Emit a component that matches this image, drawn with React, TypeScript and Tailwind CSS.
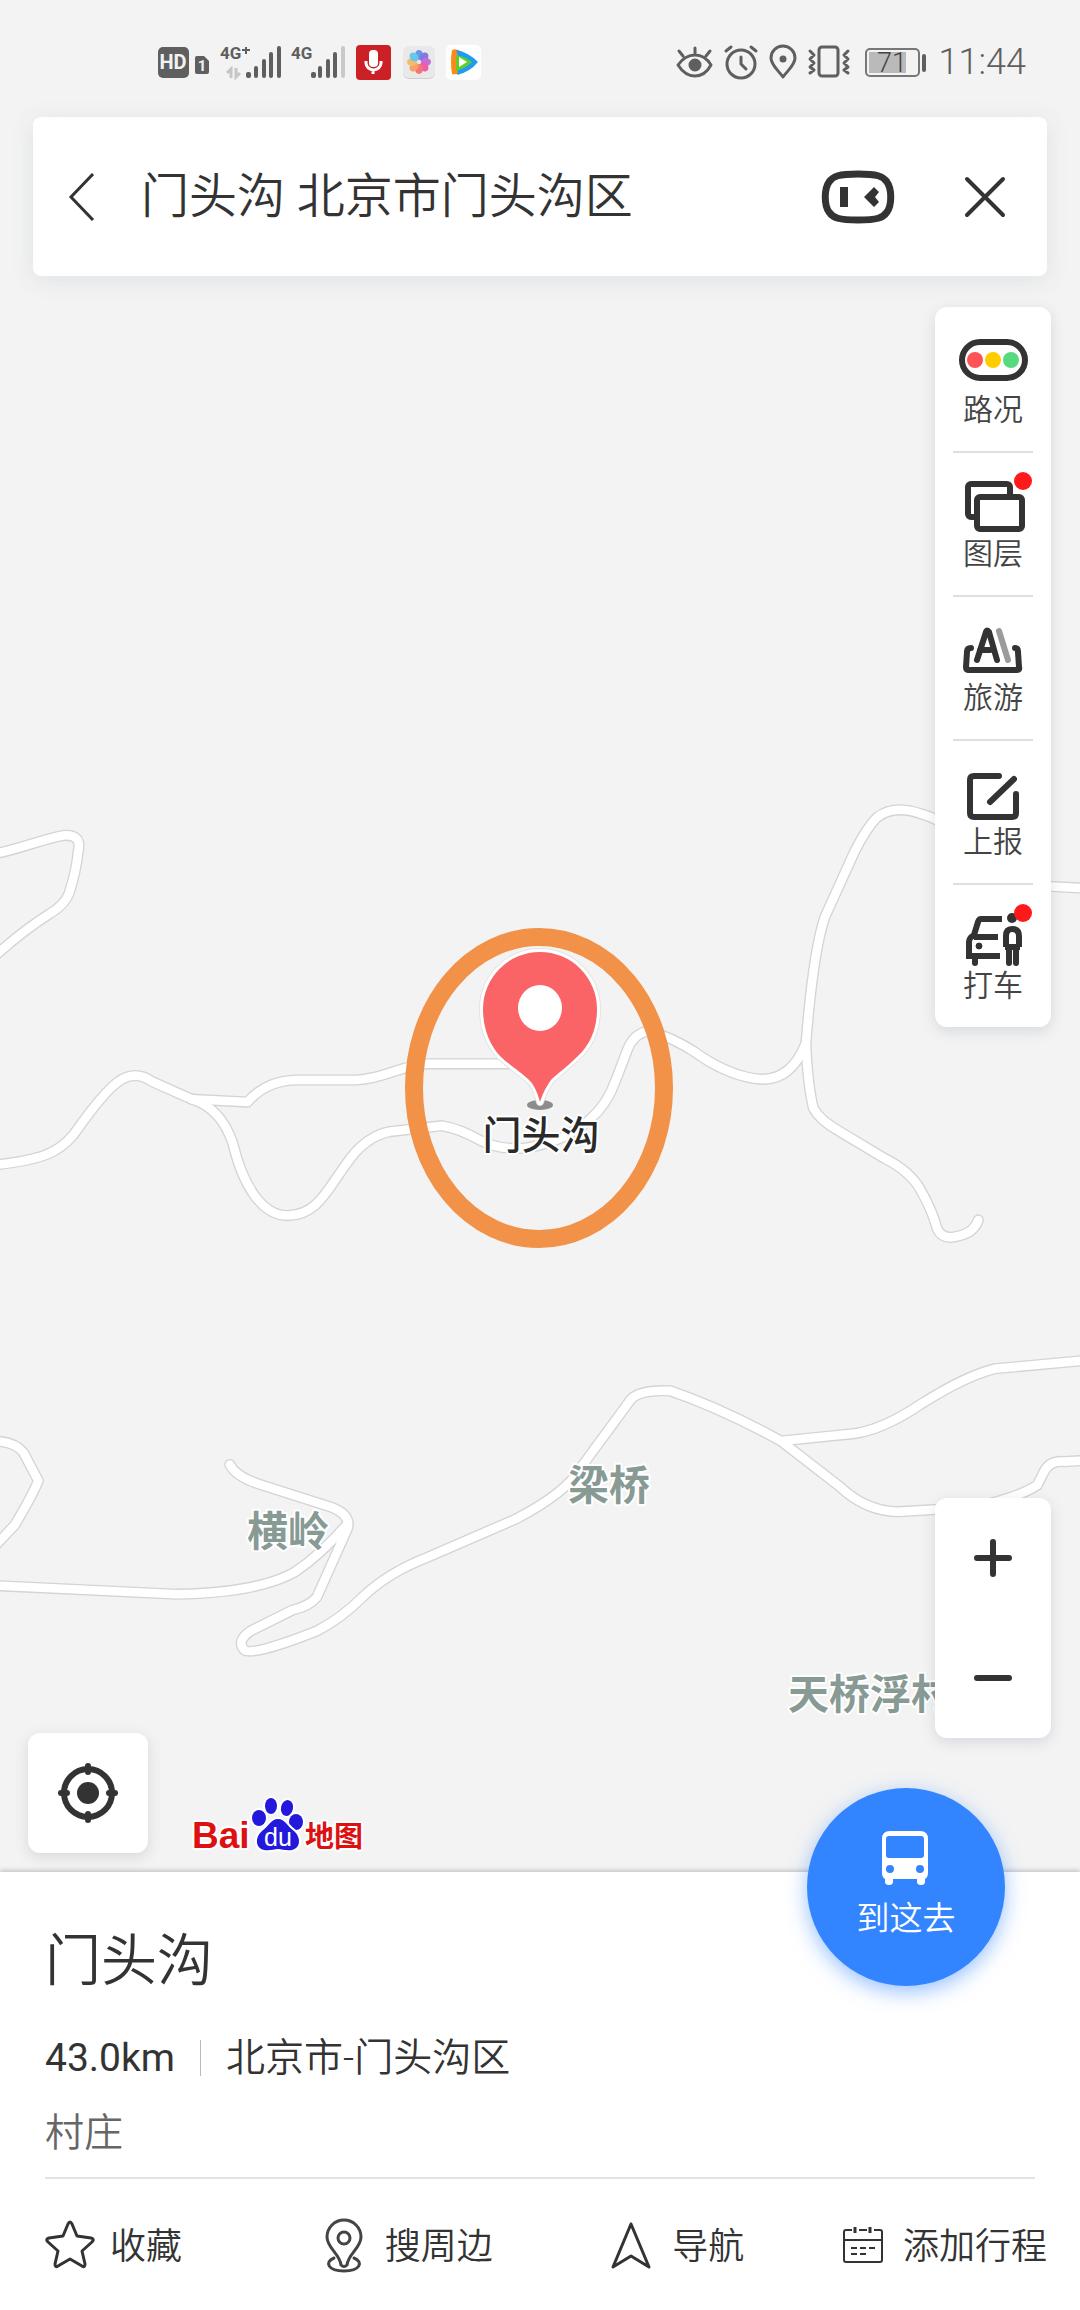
import React from 'react';

const roads = [
  'M-6 580 C15 576 30 569 43 567 Q56 566 53 578 Q52 590 47 606 Q44 614 34 620 Q15 632 -6 651',
  'M-6 791 C30 787 40 782 50 770 Q75 734 86 731 Q95 728 103 734 L130 746 Q150 752 158 776 C165 805 178 825 195 825 C215 825 222 808 235 790 Q248 771 265 768 L300 764 Q312 766 326 774 Q340 781 358 779 Q385 774 400 760 Q412 750 418 733 L426 712 Q430 702 439 700 Q452 702 470 713 Q492 729 512 732 Q536 736 547 708',
  'M130 746 L168 748 Q180 734 200 733 L242 733 C262 732 272 723 290 722 L356 722',
  'M740 603 L700 601 Q670 590 655 570 Q640 556 624 552 Q606 546 595 555 Q588 562 580 578 L560 622 Q552 645 547 708 Q548 735 552 752 Q556 760 570 768 L600 786 Q618 795 625 808 Q633 822 636 834 Q640 842 650 839 Q661 837 664 828',
  'M156 994 Q160 1002 175 1007 L225 1023 Q238 1028 236 1037 L215 1084 Q210 1090 198 1093 L170 1107 Q160 1114 166 1120 Q172 1124 215 1107 Q232 1098 245 1085 Q262 1068 290 1057 L350 1031 Q385 1013 395 995 L428 950 Q434 943 455 944 Q490 956 530 978 L570 1009 Q588 1026 610 1026 L660 1023 Q690 1017 704 1008 L708 1000 Q712 991 722 992 L740 991',
  'M530 978 L580 973 Q600 970 625 953 Q655 934 675 929 L740 923',
  'M-6 978 Q10 978 16 986 L26 1005 Q22 1015 10 1035 L-6 1052',
  'M-6 1076 L120 1082 Q175 1081 200 1067 Q218 1055 236 1034',
];

const places = [
  { name: '梁桥', x: 568, y: 1500 },
  { name: '横岭', x: 247, y: 1546 },
  { name: '天桥浮村', x: 788, y: 1709 },
];

const pinPath =
  'M540 1102 C537 1091 533 1083 528 1079 C518 1070 508 1064 500 1056 C488 1043 483 1026 483 1009 A57 57 0 0 1 597 1009 C597 1026 592 1043 578 1056 C568 1066 558 1073 551 1080 C546 1087 543 1093 540 1102Z';

const MapCanvas: React.FC = () => (
  <svg
    className="absolute inset-0 h-full w-full"
    viewBox="0 0 1080 1872"
    preserveAspectRatio="xMidYMin slice"
    aria-hidden="true"
  >
    <g transform="scale(1.4734)" fill="none" strokeLinecap="round" strokeLinejoin="round">
      {roads.map((d) => (
        <path key={d} d={d} stroke="#d4d4d4" strokeWidth="7.6" />
      ))}
      {roads.map((d) => (
        <path key={d} d={d} stroke="#ffffff" strokeWidth="5.8" />
      ))}
    </g>
    <g
      className="font-['Noto_Sans_CJK_SC',sans-serif]"
      fontWeight="700"
      stroke="#ffffff"
      strokeWidth="4"
      strokeLinejoin="round"
      paintOrder="stroke"
    >
      {places.map((place) => (
        <text key={place.name} x={place.x} y={place.y} fontSize="41" fill="#889a94">
          {place.name}
        </text>
      ))}
      <text x="541" y="1149" fontSize="39" fontWeight="500" fill="#2a2a2a" textAnchor="middle">
        门头沟
      </text>
    </g>
    <ellipse cx="540" cy="1105" rx="13" ry="5" fill="#8c8c8c" />
    <path d={pinPath} fill="#e3e3e3" stroke="#e3e3e3" strokeWidth="8" strokeLinejoin="round" />
    <path
      d={pinPath}
      fill="#fb6467"
      stroke="#ffffff"
      strokeWidth="6"
      strokeLinejoin="round"
      paintOrder="stroke"
    />
    <ellipse cx="540" cy="1008" rx="22" ry="23" fill="#ffffff" />
    <ellipse cx="539" cy="1088" rx="125" ry="151" fill="none" stroke="#f29249" strokeWidth="18" />
  </svg>
);

const StatusBar: React.FC = () => (
  <header className="flex h-[124px] items-center justify-between pr-[54px] pl-[157px] font-[Roboto,sans-serif] text-[#5f5f5f]">
    <div className="flex items-center">
      <svg className="h-9 w-[54px] overflow-visible" viewBox="0 0 54 36" fill="#5f5f5f">
        <rect x="1" y="3" width="31" height="31" rx="5" />
        <text x="16" y="25" fontSize="20" fontWeight="700" fill="#f2f2f2" textAnchor="middle">HD</text>
        <path d="M40 12 h7 l5 5 v11 a2 2 0 0 1 -2 2 h-10 a2 2 0 0 1 -2 -2 v-14 a2 2 0 0 1 2 -2z" />
        <text x="45" y="27" fontSize="15" fontWeight="700" fill="#f2f2f2" textAnchor="middle">1</text>
      </svg>
      <svg className="ml-2 h-9 w-[64px] overflow-visible" viewBox="0 0 64 36" fill="#5f5f5f">
        <text x="1" y="15" fontSize="17" fontWeight="700">4G</text>
        <path d="M27 3 v7 M23 6 h8" stroke="#5f5f5f" strokeWidth="2" />
        <path d="M12 34 v-9 l-4 4 M17 24 v9 l4 -4" fill="none" stroke="#c6c6c6" strokeWidth="3" />
        <rect x="27" y="28" width="5" height="6" rx="2" />
        <rect x="35" y="22" width="4" height="12" rx="2" />
        <rect x="43" y="15" width="4" height="19" rx="2" />
        <rect x="50" y="8" width="4" height="26" rx="2" />
        <rect x="58" y="2" width="4" height="32" rx="2" />
      </svg>
      <svg className="ml-2 h-9 w-[56px] overflow-visible" viewBox="0 0 56 36" fill="#5f5f5f">
        <text x="0" y="15" fontSize="17" fontWeight="700">4G</text>
        <rect x="20" y="28" width="5" height="6" rx="2" />
        <rect x="27" y="22" width="4" height="12" rx="2" />
        <rect x="35" y="15" width="4" height="19" rx="2" />
        <rect x="42" y="8" width="4" height="26" rx="2" />
        <rect x="50" y="2" width="4" height="32" rx="2" fill="#c9c9c9" />
      </svg>
      <svg className="ml-2 h-9 w-9" viewBox="0 0 36 36">
        <rect x="1" y="1" width="35" height="35" rx="4" fill="#cc2027" />
        <rect x="14" y="6" width="9" height="17" rx="4" fill="#ffffff" />
        <path d="M11 17 v2 a7.500 7 0 0 0 15 0 v-2 M18 26 v4" fill="none" stroke="#ffffff" strokeWidth="3" />
      </svg>
      <svg className="ml-3 h-9 w-8" viewBox="0 0 32 36">
        <rect x="0" y="3" width="32" height="32" rx="6" fill="#cfcfcf" />
        <rect x="0" y="2" width="32" height="32" rx="6" fill="#e9e9e9" />
        <g transform="translate(16 18)" opacity="0.9">
          <ellipse cy="-7" rx="4" ry="5" fill="#5b8fe8" />
          <ellipse cy="-7" rx="4" ry="5" fill="#7a6be0" transform="rotate(45)" />
          <ellipse cy="-7" rx="4" ry="5" fill="#c45fd6" transform="rotate(90)" />
          <ellipse cy="-7" rx="4" ry="5" fill="#ee4f9b" transform="rotate(135)" />
          <ellipse cy="-7" rx="4" ry="5" fill="#f36a6a" transform="rotate(180)" />
          <ellipse cy="-7" rx="4" ry="5" fill="#f79a5a" transform="rotate(225)" />
          <ellipse cy="-7" rx="4" ry="5" fill="#f8b560" transform="rotate(270)" />
          <ellipse cy="-7" rx="4" ry="5" fill="#5cc4ec" transform="rotate(315)" />
        </g>
      </svg>
      <svg className="ml-[11px] h-9 w-9" viewBox="0 0 36 36">
        <rect x="0" y="1" width="35" height="35" rx="5" fill="#ffffff" />
        <path d="M6 6 Q4 18 6 30 Q12 31 16 28 V8 Q10 4 6 6z" fill="#fb8a1a" />
        <path d="M10 6 Q22 8 32 18 Q24 28 11 31 Q15 18 10 6z" fill="#1f9bf0" />
        <path d="M10 11 Q20 13 26 18 Q20 24 10 27z" fill="#5fce2b" />
        <path d="M13 13 L21 18 L13 23z" fill="#ffffff" />
      </svg>
    </div>
    <div className="flex items-center">
      <svg className="h-9 w-[176px]" viewBox="0 0 176 36" fill="none" stroke="#5f5f5f" strokeWidth="3" strokeLinecap="round" strokeLinejoin="round">
        <path d="M3 21 Q10 11 20 11 Q30 11 36 21 Q30 32 20 32 Q10 32 3 21z M20 9 V4 M8 12 L4 7 M31 12 L35 7" />
        <circle cx="20" cy="21" r="5" fill="#5f5f5f" />
        <circle cx="66" cy="20" r="14" />
        <path d="M66 13 v7 l5 5 M51 7 l5 -4 M76 3 l5 4" />
        <path d="M108 33 C103 26 96 21 96 14 A12 12 0 0 1 120 14 C120 21 113 26 108 33z" />
        <circle cx="108" cy="15" r="2" fill="#5f5f5f" />
        <rect x="144" y="3" width="19" height="29" rx="3" />
        <path d="M135 7 l4 4 l-4 4 l4 4 l-4 4 l4 3 l-4 3 M173 7 l-4 4 l4 4 l-4 4 l4 4 l-4 3 l4 3" />
      </svg>
      <svg className="ml-[14px] h-9 w-[62px] overflow-visible" viewBox="0 0 62 36">
        <rect x="1" y="5" width="53" height="27" rx="4" fill="none" stroke="#777777" strokeWidth="2" />
        <rect x="4" y="8" width="37" height="21" fill="#bababa" />
        <rect x="57" y="10" width="4" height="18" rx="2" fill="#5f5f5f" />
        <text x="27" y="28" fontSize="27" textAnchor="middle" fill="#444444" fontWeight="300">71</text>
      </svg>
      <time className="ml-3 text-[36px] leading-10 font-light">11:44</time>
    </div>
  </header>
);

const SearchBar: React.FC = () => (
  <form className="mx-[33px] -mt-[7px] flex h-[159px] shrink-0 items-center rounded-lg bg-white pr-[30px] pl-6 shadow-[0_4px_24px_rgba(60,80,110,0.10)]">
    <button type="button" aria-label="返回" className="flex h-16 w-12 items-center justify-center">
      <svg className="h-12 w-7" viewBox="0 0 28 48" fill="none" stroke="#333333" strokeWidth="3">
        <path d="M26 1 L4 24 L26 47" />
      </svg>
    </button>
    <input
      aria-label="搜索地点"
      defaultValue="门头沟 北京市门头沟区"
      className="ml-9 h-[72px] min-w-0 flex-1 bg-transparent text-[48px] font-[350] text-[#333333] outline-none"
    />
    <button type="button" aria-label="语音助手" className="flex h-16 w-20 items-center justify-center">
      <svg className="h-14 w-[74px]" viewBox="0 0 74 56">
        <path
          d="M37 5 C56 5 62 7 66 13 C71 20 71 36 66 43 C62 49 56 51 37 51 C18 51 12 49 8 43 C3 36 3 20 8 13 C12 7 18 5 37 5z"
          fill="none"
          stroke="#333333"
          strokeWidth="7"
        />
        <rect x="19" y="18" width="8" height="20" fill="#333333" />
        <path d="M43 28 L53 18 L58 23 L54 28 L58 33 L53 38z" fill="#333333" />
      </svg>
    </button>
    <button type="button" aria-label="关闭" className="ml-[55px] flex h-16 w-16 items-center justify-center">
      <svg className="h-11 w-11" viewBox="0 0 44 44" fill="none" stroke="#333333" strokeWidth="4" strokeLinecap="round">
        <path d="M4 4 L40 40 M40 4 L4 40" />
      </svg>
    </button>
  </form>
);

const TrafficIcon = () => (
  <svg className="h-16 w-20 overflow-visible" viewBox="0 0 80 64">
    <rect x="9" y="12" width="63" height="36" rx="18" fill="none" stroke="#333333" strokeWidth="6" />
    <circle cx="22" cy="30" r="8" fill="#fc5456" />
    <circle cx="40" cy="30" r="8" fill="#ffcc00" />
    <circle cx="58" cy="30" r="8" fill="#57d980" />
  </svg>
);

const LayersIcon = () => (
  <svg className="h-16 w-20 overflow-visible" viewBox="0 0 80 64" fill="none" stroke="#333333" strokeWidth="6" strokeLinejoin="round">
    <path d="M21 43 h-3 a3 3 0 0 1 -3 -3 v-27 a3 3 0 0 1 3 -3 h36 a3 3 0 0 1 3 3 v9" />
    <rect x="24" y="23" width="45" height="32" rx="3" />
    <circle cx="70" cy="7" r="9" fill="#ff1a1a" stroke="none" />
  </svg>
);

const TravelIcon = () => (
  <svg className="h-16 w-20 overflow-visible" viewBox="0 0 80 64" fill="none" stroke="#333333" strokeWidth="6" strokeLinecap="round" strokeLinejoin="round">
    <path d="M46 13 L55 42" stroke="#9b9b9b" />
    <path d="M24 42 L33 14 Q34 11 36 14 L44 42 M27 32 H37" />
    <path d="M18 30 Q14 30 14 34 L13 49 Q13 52 16 52 H64 Q67 52 66 49 L65 34 Q65 30 62 30" />
  </svg>
);

const ReportIcon = () => (
  <svg className="h-16 w-20 overflow-visible" viewBox="0 0 80 64" fill="none" stroke="#333333" strokeWidth="6" strokeLinecap="round" strokeLinejoin="round">
    <path d="M46 14 H21 Q17 14 17 18 V51 Q17 55 21 55 H59 Q63 55 63 51 V32 M61 17 L37 40" />
  </svg>
);

const TaxiIcon = () => (
  <svg className="h-16 w-20 overflow-visible" viewBox="0 0 80 64" fill="none" stroke="#333333" strokeWidth="6">
    <path d="M49 13 H28 Q26 13 25 16 L21 29 Q16 32 16 36 V50 H47 M21 31 H45" />
    <path d="M22 52 v5" strokeLinecap="round" />
    <circle cx="26" cy="40" r="3" fill="#333333" strokeWidth="1" />
    <circle cx="59" cy="12" r="5" fill="#333333" stroke="none" />
    <path d="M53 41 V30 Q53 23 59 23 Q66 23 66 30 V41 M52 41 H67" />
    <path d="M56 41 V57 M63 41 V57" strokeWidth="6" strokeLinecap="round" />
    <circle cx="70" cy="7" r="9" fill="#ff1a1a" stroke="none" />
  </svg>
);

const tools = [
  { label: '路况', Icon: TrafficIcon },
  { label: '图层', Icon: LayersIcon },
  { label: '旅游', Icon: TravelIcon },
  { label: '上报', Icon: ReportIcon },
  { label: '打车', Icon: TaxiIcon },
];

const panelShadow = 'shadow-[0_4px_14px_rgba(60,80,110,0.16)]';

const ToolPanel: React.FC = () => (
  <nav className={`flex w-[116px] flex-col rounded-xl bg-white px-[18px] ${panelShadow}`}>
    {tools.map(({ label, Icon }, i) => (
      <button
        key={label}
        type="button"
        className={`flex h-36 flex-col items-center border-t-2 pt-[21px] ${i > 0 ? 'border-[#dedede]' : 'border-transparent'}`}
      >
        <Icon />
        <span className="text-[30px] leading-8 font-[350] text-[#444444]">{label}</span>
      </button>
    ))}
  </nav>
);

const ZoomPanel: React.FC = () => (
  <div className={`flex w-[116px] flex-col rounded-xl bg-white ${panelShadow}`}>
    <button type="button" aria-label="放大" className="flex h-[120px] items-center justify-center">
      <svg className="h-11 w-11" viewBox="0 0 44 44" stroke="#333333" strokeWidth="6" strokeLinecap="round">
        <path d="M6 22 H38 M22 6 V38" />
      </svg>
    </button>
    <button type="button" aria-label="缩小" className="flex h-[120px] items-center justify-center">
      <svg className="h-11 w-11" viewBox="0 0 44 44" stroke="#333333" strokeWidth="6" strokeLinecap="round">
        <path d="M6 22 H38" />
      </svg>
    </button>
  </div>
);

const BaiduLogo: React.FC = () => (
  <svg className="h-16 w-[180px] overflow-visible" viewBox="0 0 180 64" role="img" aria-label="Baidu 地图">
    <g stroke="#ffffff" strokeWidth="4" paintOrder="stroke" strokeLinejoin="round">
      <text x="4" y="59" fontSize="37" fontWeight="700" fill="#dc1111" className="font-['Liberation_Sans',sans-serif]">Bai</text>
      <ellipse cx="71" cy="29" rx="7" ry="8" fill="#2319dc" />
      <ellipse cx="83" cy="17" rx="6" ry="8" fill="#2319dc" />
      <ellipse cx="99" cy="19" rx="6" ry="8" fill="#2319dc" transform="rotate(12 99 19)" />
      <ellipse cx="108" cy="33" rx="7" ry="8" fill="#2319dc" />
      <path d="M90 30 C97 30 100 38 106 42 C113 48 113 59 104 61 C98 62 94 60 90 60 C86 60 82 62 76 61 C67 59 67 48 74 42 C80 38 83 30 90 30z" fill="#2319dc" />
      <text x="117" y="58" fontSize="29" fontWeight="700" fill="#dc1111" className="font-['Noto_Sans_CJK_SC',sans-serif]">地图</text>
    </g>
    <text x="90" y="57" fontSize="25" fill="#ffffff" textAnchor="middle" className="font-['Liberation_Sans',sans-serif]">du</text>
  </svg>
);

const StarIcon = () => (
  <svg className="h-14 w-12 overflow-visible" viewBox="0 0 48 56" fill="none" stroke="#333333" strokeWidth="3" strokeLinejoin="round">
    <path d="M23 7 Q25 3 27 7 L32 19 L46 21 Q50 22 47 25 L37 34 L40 47 Q40 51 37 49 L25 42 L13 49 Q10 51 10 47 L13 34 L3 25 Q0 22 4 21 L18 19z" />
  </svg>
);

const NearbyIcon = () => (
  <svg className="h-14 w-12 overflow-visible" viewBox="0 0 48 56" fill="none" stroke="#444444" strokeWidth="3" strokeLinecap="round" strokeLinejoin="round">
    <path d="M21 48 C20 37 7 31 7 20 A17 17 0 0 1 41 20 C41 31 28 37 27 48 Q24 51 21 48z" />
    <circle cx="24" cy="21" r="6" />
    <path d="M14 41 C4 45 8 54 24 54 C40 54 44 45 34 41" />
  </svg>
);

const NavigateIcon = () => (
  <svg className="h-14 w-12" viewBox="0 0 48 56" fill="none" stroke="#333333" strokeWidth="3" strokeLinejoin="round">
    <path d="M24 7 L42 50 L24 39 L6 50z" />
  </svg>
);

const CalendarIcon = () => (
  <svg className="h-14 w-12" viewBox="0 0 48 56" fill="none" stroke="#333333" strokeWidth="2">
    <path d="M14 13 H8 Q6 13 6 15 V43 Q6 45 8 45 H42 Q44 45 44 43 V15 Q44 13 42 13 H36 M21 13 H29 M6 23 H44" />
    <path d="M17 10 V16 M32 10 V16" strokeWidth="3" />
    <path d="M13 31 H19 M22 31 H28 M31 31 H37 M13 37 H19 M22 37 H28" />
  </svg>
);

const actions = [
  { label: '收藏', Icon: StarIcon },
  { label: '搜周边', Icon: NearbyIcon },
  { label: '导航', Icon: NavigateIcon },
  { label: '添加行程', Icon: CalendarIcon },
];

const PlaceSheet: React.FC = () => (
  <section className="relative bg-white pr-[33px] pl-[45px] shadow-[0_-2px_4px_rgba(0,0,0,0.18)]">
    <button
      type="button"
      className="absolute -top-[84px] right-[75px] flex h-[198px] w-[198px] flex-col items-center rounded-full bg-[#3385ff] pt-[39px] text-white shadow-[0_6px_20px_rgba(51,133,255,0.5)]"
    >
      <svg className="h-16 w-16" viewBox="0 0 64 64">
        <path
          fillRule="evenodd"
          fill="#ffffff"
          d="M16 4 H46 Q54 4 54 12 V46 Q54 50 51 52 V55 Q51 58 47 58 Q43 58 43 55 V52 H19 V55 Q19 58 15 58 Q11 58 11 55 V52 Q8 50 8 46 V12 Q8 4 16 4z M15 9 Q12 9 12 12 V28 Q12 31 15 31 H47 Q50 31 50 28 V12 Q50 9 47 9z"
        />
        <circle cx="16" cy="42" r="4" fill="#3385ff" />
        <circle cx="46" cy="42" r="4" fill="#3385ff" />
      </svg>
      <span className="mt-2 text-[33px] leading-10 font-[350]">到这去</span>
    </button>

    <h1 className="pt-[57px] text-[56px] leading-[64px] font-[350] text-[#333333]">门头沟</h1>
    <p className="mt-[41px] flex items-center text-[39px] leading-[48px] text-[#333333]">
      <span>43.0km</span>
      <span className="mx-[25px] h-9 w-px bg-[#bbbbbb]" />
      <span className="font-[350]">北京市-门头沟区</span>
    </p>
    <p className="mt-[31px] text-[39px] leading-10 font-[350] text-[#666666]">村庄</p>
    <hr className="mt-6 mr-3 border-t-2 border-[#e3e3e3]" />
    <div className="grid h-[131px] grid-cols-[275fr_288fr_231fr_208fr] items-center">
      {actions.map(({ label, Icon }) => (
        <button key={label} type="button" className="flex items-center gap-[17px] whitespace-nowrap">
          <Icon />
          <span className="pt-1 text-[36px] leading-10 font-[350] text-[#333333]">{label}</span>
        </button>
      ))}
    </div>
  </section>
);

export default function App() {
  return (
    <div className="flex min-h-screen flex-col overflow-hidden bg-[#f3f3f3] font-[Roboto,'Noto_Sans_CJK_SC',sans-serif]">
      <main className="relative flex flex-1 flex-col">
        <MapCanvas />
        <div className="relative flex flex-1 flex-col">
          <StatusBar />
          <SearchBar />
          <div className="mt-[31px] flex flex-1 justify-between pr-[29px] pl-7">
            <div className="flex items-end gap-10 pb-[19px]">
              <button
                type="button"
                aria-label="定位"
                className={`flex h-[120px] w-[120px] items-center justify-center rounded-xl bg-white ${panelShadow}`}
              >
                <svg className="h-16 w-16" viewBox="0 0 64 64" fill="none" stroke="#333333" strokeWidth="6" strokeLinecap="round">
                  <circle cx="32" cy="32" r="24" />
                  <circle cx="32" cy="32" r="11" fill="#333333" stroke="none" />
                  <path d="M32 5 V11 M32 53 V59 M5 32 H11 M53 32 H59" />
                </svg>
              </button>
              <BaiduLogo />
            </div>
            <div className="flex flex-col justify-between gap-8 pb-[134px]">
              <ToolPanel />
              <ZoomPanel />
            </div>
          </div>
        </div>
      </main>
      <PlaceSheet />
    </div>
  );
}
